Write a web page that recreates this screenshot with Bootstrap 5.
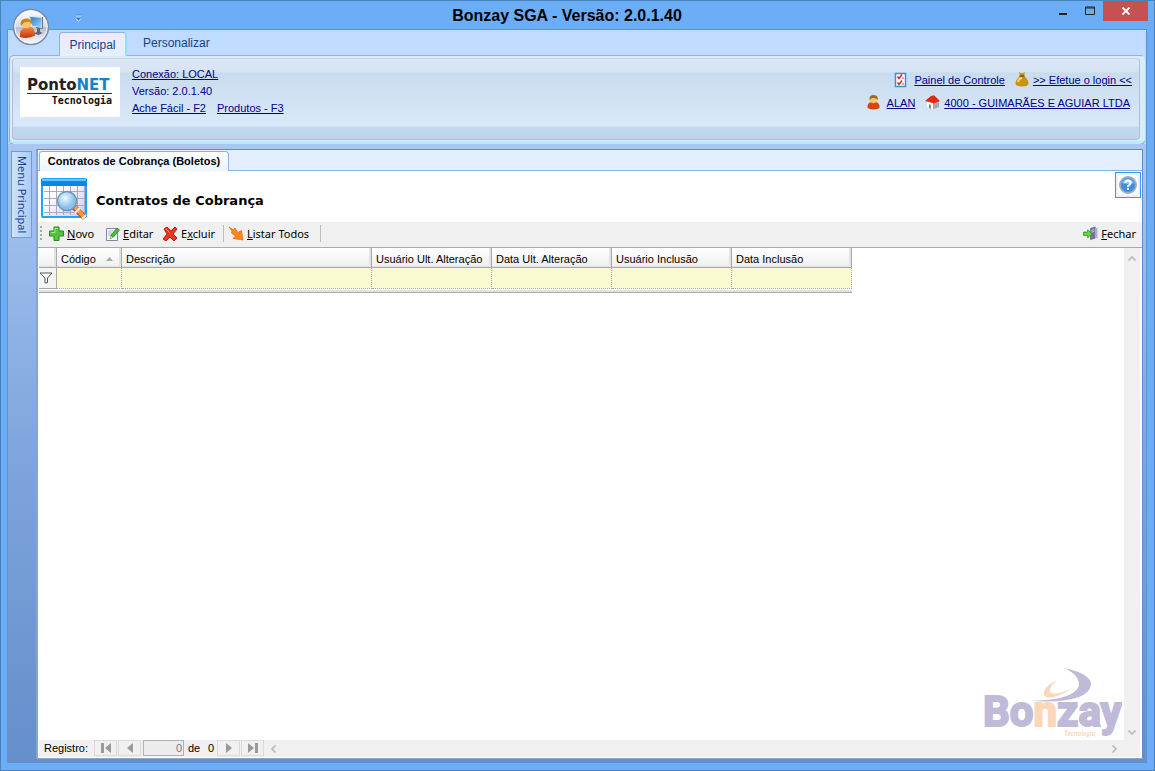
<!DOCTYPE html>
<html lang="pt-BR">
<head>
<meta charset="utf-8">
<meta name="viewport" content="width=device-width, initial-scale=1">
<title>Bonzay SGA</title>
<link href="https://cdn.jsdelivr.net/npm/bootstrap@5.3.0/dist/css/bootstrap.min.css" rel="stylesheet">
<style>
  body { font: 11px/16px "Liberation Sans", Arial, sans-serif; color: #000; }
  button, input { font: inherit; color: inherit; }
  button { background: none; border: 0; padding: 0; }
  svg { display: block; flex: none; }

  .app-window { height: 100vh; min-height: 480px; background: #6badf6; border: 1px solid #4a82ba; padding: 0 7px 7px 6px; }
  .title-bar { height: 28px; flex: none; }
  .title-bar h1 { font: bold 16px/29px "Liberation Sans", Arial, sans-serif; margin: 0; padding-right: 20px; }
  .orb { left: 5px; top: 1px; z-index: 3; }
  .quick { left: 70px; top: 12px; }
  .win-controls { right: 6px; top: 0; height: 20px; }
  .win-controls button { width: 27px; height: 20px; display: flex; align-items: center; justify-content: center; }
  .win-controls .win-close { width: 45px; background: #c75050; }

  .frame { border: 1px solid #5b93d3; border-bottom: 0; background: #bfdbff; min-height: 0; }
  .ribbon-tabs { height: 25px; flex: none; padding-left: 51px; font-size: 12px; }
  .ribbon-tabs button { height: 24px; padding: 0 16px; color: #15428b; line-height: 22px; }
  .ribbon-tabs button.active { width: 68px; padding: 0; background: linear-gradient(#eeeafa, #e6effb); border: 1px solid #8db2e3; border-right: 2px solid #9adcf0; border-bottom: 0; border-radius: 4px 4px 0 0; position: relative; margin-bottom: -1px; line-height: 20px; }
  .ribbon { flex: none; height: 89px; margin: 0 1px; border: 1px solid #8db2e3; border-right: 2px solid #c8f4fb; border-bottom: 3px solid #b4ecf8; border-radius: 5px; background: #dcebf6; padding: 2px 3px 1px 2px; box-shadow: 0 1px 1px #6f9cd4; }
  .ribbon-group { height: 100%; border: 1px solid #a5c3de; border-top-color: #c3d5e4; border-radius: 4px; background: linear-gradient(#dde8f5 0, #d6e3f2 13px, #c9dbee 14px, #dae9fa 67px, #c1d8ef 68px, #bdd4ea 100%); padding: 8px 7px 0 7px; }
  .ribbon a { color: #00008b; text-decoration: underline; text-underline-offset: 1px; }
  .brand-box { width: 100px; height: 50px; background: #fff; padding: 10px 8px 0 7px; }
  .brand-top { font: bold 15px/16px "DejaVu Sans", sans-serif; color: #222; border-bottom: 1px solid #333; }
  .brand-top b { color: #1482c8; font-weight: 700; }
  .brand-bottom { font: bold 10px/14px "DejaVu Sans Mono", monospace; text-align: right; color: #111; }
  .conn { color: #00008b; padding-left: 12px; line-height: 14px; }
  .conn .row-two { line-height: 20px; }
  .conn .row-three { gap: 11px; }
  .account { padding-top: 5px; }
  .account .line { height: 23px; line-height: 17px; }
  .account .line-two { padding-right: 2px; }
  .item { display: flex; gap: 6px; }
  .item + .item { margin-left: 10px; gap: 4px; }

  .work { background: linear-gradient(#aac7f2, #7ea5dc 50%, #658fcb); padding: 5px 3px 4px 3px; min-height: 0; }
  .side-tab { width: 21px; height: 87px; margin-top: 2px; border: 1px solid #6f9bd8; background: linear-gradient(90deg, #cfe1fa, #adcbf4); color: #15428b; writing-mode: vertical-rl; font: 11px/18px "Noto Sans", sans-serif; padding: 4px 0; text-align: left; white-space: nowrap; }
  .doc { margin-left: 4px; border: 1px solid #5f8dcc; border-left: 2px solid #87a5d0; border-bottom-color: #90a8c8; background: #fff; min-width: 0; }
  .doc-tabs { flex: none; height: 21px; background: #e3efff; border-bottom: 1px solid #8db2e3; padding: 1px 0 0 1px; }
  .doc-tabs button { height: 20px; width: 190px; border: 1px solid #8db2e3; border-bottom: 0; border-radius: 3px 4px 0 0; background: linear-gradient(#fff, #eaf3ff); font-weight: 700; line-height: 19px; white-space: nowrap; }
  .page-head { flex: none; height: 51px; padding: 1px 1px 0 3px; }
  .page-head h2 { font: bold 13px/18px "DejaVu Sans", Verdana, sans-serif; margin: 20px 0 0 8px; }
  .sheet-icon { margin-top: 6px; }
  .help { width: 26px; height: 26px; border: 1px solid #3399ff; background: #f0f0f0; display: flex; align-items: center; justify-content: center; }
  .tools { flex: none; height: 25px; background: #f0f0f0; padding: 0 6px 2px 2px; font: 11px/22px "Noto Sans", Tahoma, sans-serif; }
  .tools button { display: flex; align-items: center; gap: 3px; white-space: nowrap; min-width: 57px; }
  .tools .t-new { margin-left: 7px; }
  .tools .t-list { margin-left: 5px; min-width: 91px; }
  .tools .t-close { min-width: 0; }
  .tools u { text-underline-offset: 1px; }
  .grip { width: 2px; height: 15px; background: repeating-linear-gradient(#a8a8a8 0 2px, transparent 2px 4px); }
  .sep { width: 1px; height: 17px; background: #bdbdbd; }
  .t-del + .sep { margin-left: 3px; }

  .grid-area { border-top: 1px solid #a9a9a9; min-height: 0; }
  .grid-table { width: 813px; table-layout: fixed; border-collapse: separate; border-spacing: 0; margin-left: 1px; border-bottom: 1px solid #a9a9a9; }
  .grid-table th { height: 20px; padding: 2px 0 0 4px; line-height: 16px; font-weight: 400; white-space: nowrap; background: linear-gradient(#fff, #efefef); border-right: 1px solid #a9a9a9; border-bottom: 1px solid #a9a9a9; box-shadow: inset -2px -1px 0 #e2e2e2; }
  .grid-table td { height: 21px; padding: 0; background: #fafad2; border-right: 1px dotted #a9a9a9; border-bottom: 1px dotted #a9a9a9; }
  .grid-table td.rowhead { background: #f4f4f4; border-style: solid; }
  .grid-table td input { width: 100%; height: 19px; border: 0; background: none; display: block; padding: 0 4px; }
  .grid-table .foot td { height: 3px; background: #e2e2e2; border: 0; border-top: 1px solid #fff; }
  .vbar { width: 16px; background: #f0f0f0; flex: none; margin-right: 2px; padding: 8px 0 5px; }
  .pager { flex: none; height: 17px; background: #f0f0f0; margin: 0 2px 1px 1px; line-height: 16px; padding: 0 22px 0 5px; }
  .pager label { width: 50px; }
  .pager .nav-btn { width: 23px; height: 16px; border: 1px solid #dadada; display: flex; align-items: center; justify-content: center; margin-right: 1px; }
  .pager input { width: 41px; height: 16px; border: 1px solid #adb2b8; background: #ececec; text-align: right; padding: 0 1px; color: #6b7b8d; line-height: 14px; margin-left: 1px; }
  .pager .total { width: 33px; padding: 0 3px 0 4px; display: flex; justify-content: space-between; }
  .watermark { right: 20px; bottom: 2px; }
</style>
</head>
<body>
<div class="app-window d-flex flex-column position-relative">
  <header class="title-bar">
    <h1 class="text-center">Bonzay SGA - Versão: 2.0.1.40</h1>
    <button class="orb position-absolute" aria-label="Aplicativo">
      <svg width="50" height="48" viewBox="0 0 50 48">
        <defs>
          <linearGradient id="orbg" x2="0" y2="1"><stop stop-color="#fff"/><stop offset=".5" stop-color="#d5d9e6"/><stop offset=".52" stop-color="#b4bdd2"/><stop offset="1" stop-color="#fff"/></linearGradient>
          <linearGradient id="red" x2="0" y2="1"><stop stop-color="#f5893b"/><stop offset="1" stop-color="#c5330b"/></linearGradient>
          <linearGradient id="scr" x2="1" y2="1"><stop stop-color="#1d78d4"/><stop offset="1" stop-color="#a5dafa"/></linearGradient>
        </defs>
        <circle cx="25" cy="25" r="17.500" fill="url(#orbg)" stroke="#7c8ca8" stroke-width="1.500"/>
        <circle cx="25" cy="25" r="16.200" fill="none" stroke="#f4f6fb"/>
        <path d="M23.500 14.500l12.500.8v10.500l-10-1.500z" fill="url(#scr)" stroke="#dce8f2"/>
        <path d="M36.500 15v11.500L30 25.500" fill="none" stroke="#667688"/>
        <path d="M31 26h3v3.500l2.500 1.500-4 2-5-1.500 3.500-1.500z" fill="#596779"/>
        <path d="M14 35q-1-8 6-10h5q4 1 4 8.500-7 4-15 1.500z" fill="url(#red)"/>
        <circle cx="20.500" cy="21.500" r="4.800" fill="#f6c274"/><path d="M15 24q-2-7 5-7.500 6 0 7 5.500l-2-.5-2-2-5 1z" fill="#c98516"/>
      </svg>
    </button>
    <button class="quick position-absolute" aria-label="Personalizar acesso rápido">
      <svg width="14" height="10" viewBox="0 0 14 10"><path d="M5 2h5" stroke="#4379bb"/><path d="M5 3h5" stroke="#d0e5ff"/><path d="M5 5h5L7.500 8z" fill="#4379bb"/><path d="M5 5.500l2.500 3 2.500-3" fill="none" stroke="#d0e5ff"/></svg>
    </button>
    <div class="win-controls position-absolute d-flex">
      <button aria-label="Minimizar"><svg width="10" height="10" viewBox="0 0 10 10"><path d="M1 8h8" stroke="#222" stroke-width="2"/></svg></button>
      <button aria-label="Maximizar"><svg width="12" height="10" viewBox="0 0 12 10"><path d="M1.500 1h9v7.500h-9zM1 2h10" fill="none" stroke="#222"/></svg></button>
      <button class="win-close" aria-label="Fechar janela"><svg width="10" height="8" viewBox="0 0 10 8"><path d="M1.500.5l7 7M8.500.5l-7 7" stroke="#fff" stroke-width="1.800"/></svg></button>
    </div>
  </header>

  <div class="frame d-flex flex-column flex-grow-1">
    <nav class="ribbon-tabs d-flex align-items-end">
      <button class="active">Principal</button>
      <button>Personalizar</button>
    </nav>
    <section class="ribbon">
      <div class="ribbon-group d-flex align-items-start">
        <div class="brand-box">
          <div class="brand-top">Ponto<b>NET</b></div>
          <div class="brand-bottom">Tecnologia</div>
        </div>
        <div class="conn">
          <div><a href="#">Conexão: LOCAL</a></div>
          <div class="row-two">Versão: 2.0.1.40</div>
          <div class="row-three d-flex"><a href="#">Ache Fácil - F2</a><a href="#">Produtos - F3</a></div>
        </div>
        <div class="account ms-auto">
          <div class="line d-flex justify-content-end">
            <div class="item">
              <svg width="14" height="16" viewBox="0 0 14 16"><path d="M1.500 1.500h10v13h-10z" fill="#fff" stroke="#3c8fd0" stroke-width="1.500"/><path d="M3.500 4.500l1.500 2L8 2.500M3.500 10.500l1.500 2 3-4" fill="none" stroke="#d22" stroke-width="1.500"/><path d="M8 6h2M8 12h2" stroke="#b44"/></svg>
              <a href="#">Painel de Controle</a>
            </div>
            <div class="item">
              <svg width="14" height="15" viewBox="0 0 14 15"><path d="M4 0l3 1.500L10 0 9 4q5 4 4.500 8-1 2.500-6.500 2.500T.5 12Q0 8 5 4z" fill="#c99210"/><path d="M4.500 4h5" stroke="#765000" stroke-width="1.500"/><path d="M3 10q1-4 4-4" stroke="#f8dc70" stroke-width="2" fill="none"/></svg>
              <a href="#">&gt;&gt; Efetue o login &lt;&lt;</a>
            </div>
          </div>
          <div class="line line-two d-flex justify-content-end">
            <div class="item">
              <svg width="14" height="15" viewBox="0 0 14 15"><path d="M.5 13Q0 8 4 7h5q4 1 3.500 6-6 3-12 0z" fill="#d8450e"/><circle cx="6.500" cy="4.500" r="3.700" fill="#f6c274"/><path d="M2.500 5Q2 0 6.500 0T11 5L8 3 5 3z" fill="#a8661a"/></svg>
              <a href="#">ALAN</a>
            </div>
            <div class="item">
              <svg width="15" height="15" viewBox="0 0 15 15"><path d="M2 7v5l6 2.500V8z" fill="#fff"/><path d="M8 8v6.500l6-2.500V6z" fill="#a9a9a9"/><path d="M0 6L6 1l3-.8L15 6l-6.500 2.500L7.500 8z" fill="#e02a12"/><path d="M4 9v4l2 1v-4z" fill="#888"/></svg>
              <a href="#">4000 - GUIMARÃES E AGUIAR LTDA</a>
            </div>
          </div>
        </div>
      </div>
    </section>

    <div class="work d-flex flex-grow-1">
      <button class="side-tab">Menu Principal</button>
      <main class="doc d-flex flex-column flex-grow-1 position-relative">
        <div class="doc-tabs"><button>Contratos de Cobrança (Boletos)</button></div>
        <div class="page-head d-flex align-items-start">
          <svg class="sheet-icon" width="47" height="43" viewBox="0 0 47 43">
            <defs><pattern id="cells" x="3" y="8" width="7" height="7" patternUnits="userSpaceOnUse"><path d="M0 5.500h7M5.500 0v7" stroke="#aaaabc"/></pattern>
            <linearGradient id="sheet" x2="1" y2="1"><stop offset=".3" stop-color="#fff"/><stop offset="1" stop-color="#cdc8f2"/></linearGradient>
            <radialGradient id="lens" cx=".4" cy=".35"><stop stop-color="#effaff"/><stop offset="1" stop-color="#85c2ee"/></radialGradient></defs>
            <rect x="1" y="1" width="44" height="38" rx="1" fill="url(#sheet)" stroke="#1ea4fa" stroke-width="2"/>
            <rect x="3" y="8" width="41" height="29" fill="url(#cells)"/>
            <path d="M0 1h46v7H0z" fill="#0c86e6"/><path d="M1 1h44v2H1z" fill="#67c5ff"/>
            <path d="M33 29l11 11" stroke="#b95a18" stroke-width="6"/><path d="M33 28l10 11" stroke="#ff9834" stroke-width="4"/><path d="M34 35l5-5M41 41l4-4" stroke="#eee" stroke-width="2"/>
            <circle cx="26" cy="23" r="9.500" fill="url(#lens)" stroke="#7194b8" stroke-width="1.500"/>
          </svg>
          <h2>Contratos de Cobrança</h2>
          <button class="help ms-auto" aria-label="Ajuda">
            <svg width="20" height="20" viewBox="0 0 20 20"><path d="M0 0h20v20H0z" fill="#fff"/><circle cx="10" cy="10" r="8" fill="#3f8ede" stroke="#9aabc4" stroke-width="2"/><path d="M4 8q2-4 6-4t6 4q-6 2-12 0z" fill="#8bc1f4"/><path d="M7.500 8q0-2.500 2.500-2.500T12.500 8q0 1.500-2.500 3v1M10 13v2" fill="none" stroke="#fff" stroke-width="2"/></svg>
          </button>
        </div>
        <div class="tools d-flex align-items-center">
          <span class="grip"></span>
          <button class="t-new"><svg width="15" height="15" viewBox="0 0 15 15"><path d="M5 1h5v4h4.500v5H10v4.500H5V10H.5V5H5z" fill="#55c63c" stroke="#278a1c"/><path d="M6 2.500h3M2 6.500h4v-4" fill="none" stroke="#a5ec87"/></svg><span><u>N</u>ovo</span></button>
          <button><svg width="14" height="14" viewBox="0 0 14 14"><path d="M.5 1.500h11v12H.5z" fill="#f3f8ff" stroke="#7a8ca5"/><path d="M2 4h5M2 6h4M2 8h3" stroke="#a5c0de"/><path d="M4 12l1-4 6-7 2.500 2-6 7z" fill="#4bb93c" stroke="#287e20" stroke-width=".7"/><path d="M4 12l.8-3 2 1.600z" fill="#f3d6a0"/></svg><span><u>E</u>ditar</span></button>
          <button class="t-del"><svg width="15" height="15" viewBox="0 0 15 15"><path d="M1 3l3-2 4 4 4-4 2 2-4 5 4 4-3 3-4-4-4 4-3-2 4-5z" fill="#e93720" stroke="#b91f0e"/><path d="M3 3l4 4" stroke="#ff9a80"/></svg><span>E<u>x</u>cluir</span></button>
          <span class="sep"></span>
          <button class="t-list"><svg width="15" height="15" viewBox="0 0 15 15"><path d="M0 1l4.500 3L6 2l3 4.500 3.500-2L14 14l-10-1.500 2.500-2.500-4-3 .5-2z" fill="#f98b1d" stroke="#e35e12" stroke-width=".7"/></svg><span><u>L</u>istar Todos</span></button>
          <span class="sep"></span>
          <button class="t-close ms-auto"><svg width="15" height="15" viewBox="0 0 16 15"><path d="M8 2l5-1.500v12L8 14z" fill="#7475a5" stroke="#52527e" stroke-width=".6"/><path d="M13 1.500h2.500v11H13z" fill="#b0b0c8"/><path d="M9 4l3-.7M9 6l3-.7" stroke="#c9cae3"/><path d="M.5 6H5V3.500L9.500 8 5 12V9.500H.5z" fill="#6cd842" stroke="#278a1c" stroke-width=".8"/></svg><span><u>F</u>echar</span></button>
        </div>
        <div class="grid-area d-flex flex-grow-1 position-relative">
          <div class="flex-grow-1 overflow-hidden">
            <table class="grid-table">
              <colgroup><col style="width:18px"><col style="width:65px"><col style="width:250px"><col style="width:120px"><col style="width:120px"><col style="width:120px"><col style="width:120px"></colgroup>
              <thead><tr><th></th><th><div class="d-flex align-items-center justify-content-between pe-2">Código<svg width="7" height="4" viewBox="0 0 7 4"><path d="M0 4l3.500-4L7 4z" fill="#aaa"/></svg></div></th><th>Descrição</th><th>Usuário Ult. Alteração</th><th>Data Ult. Alteração</th><th>Usuário Inclusão</th><th>Data Inclusão</th></tr></thead>
              <tbody>
                <tr><td class="rowhead"><svg width="15" height="12" viewBox="0 0 15 12"><path d="M1 1h12L8.500 6v4.500L6 11V6z" fill="#fff" stroke="#555"/></svg></td><td><input aria-label="Filtrar Código"></td><td><input aria-label="Filtrar Descrição"></td><td><input aria-label="Filtrar Usuário Ult. Alteração"></td><td><input aria-label="Filtrar Data Ult. Alteração"></td><td><input aria-label="Filtrar Usuário Inclusão"></td><td><input aria-label="Filtrar Data Inclusão"></td></tr>
                <tr class="foot"><td colspan="7"></td></tr>
              </tbody>
            </table>
          </div>
          <div class="vbar d-flex flex-column justify-content-between align-items-center">
            <svg width="8" height="5" viewBox="0 0 8 5"><path d="M.5 4.500L4 1l3.500 3.500" fill="none" stroke="#bbb" stroke-width="1.700"/></svg>
            <svg width="8" height="5" viewBox="0 0 8 5"><path d="M.5.5L4 4 7.500.5" fill="none" stroke="#bbb" stroke-width="1.700"/></svg>
          </div>
          <svg class="watermark position-absolute" width="140" height="72" viewBox="0 0 140 72">
            <g font-family="Roboto, sans-serif" font-weight="700" font-size="42" fill="#bfbad7" stroke="#bfbad7" stroke-width="2">
              <text x="1" y="60">Bo<tspan fill="#fad7ba" stroke="#fad7ba">n</tspan>zay</text>
            </g>
            <path d="M82 2Q110 8 109 19Q106 38 48 35Q92 34 97 20Q98 9 82 2z" fill="#bfbad7"/>
            <path d="M75 14Q60 22 62 29Q66 37 93 21Q72 31 68 26Q67 21 75 14z" fill="#fad7ba"/>
            <text x="82" y="70" font-family="Lato, sans-serif" font-style="italic" font-weight="700" font-size="7" fill="#fad7ba">Tecnologia</text>
          </svg>
        </div>
        <div class="pager d-flex">
          <label for="reg">Registro:</label>
          <button class="nav-btn" aria-label="Primeiro"><svg width="10" height="10" viewBox="0 0 10 10"><path d="M0 0h3v10H0zM10 0v10L4 5z" fill="#999"/></svg></button>
          <button class="nav-btn" aria-label="Anterior"><svg width="6" height="10" viewBox="0 0 6 10"><path d="M6 0v10L0 5z" fill="#999"/></svg></button>
          <input id="reg" value="0">
          <span class="total"><span>de</span><span>0</span></span>
          <button class="nav-btn" aria-label="Próximo"><svg width="6" height="10" viewBox="0 0 6 10"><path d="M0 0v10l6-5z" fill="#999"/></svg></button>
          <button class="nav-btn" aria-label="Último"><svg width="10" height="10" viewBox="0 0 10 10"><path d="M7 0h3v10H7zM0 0v10l6-5z" fill="#999"/></svg></button>
          <div class="d-flex flex-grow-1 align-items-center justify-content-between ps-1">
            <svg width="8" height="8" viewBox="0 0 8 8"><path d="M6.500.5L3 4l3.500 3.500" fill="none" stroke="#bbb" stroke-width="1.700"/></svg>
            <svg width="8" height="8" viewBox="0 0 8 8"><path d="M2.500.5L6 4 2.500 7.500" fill="none" stroke="#bbb" stroke-width="1.700"/></svg>
          </div>
        </div>
      </main>
    </div>
  </div>
</div>
<script src="https://cdn.jsdelivr.net/npm/bootstrap@5.3.0/dist/js/bootstrap.bundle.min.js"></script>
</body>
</html>
